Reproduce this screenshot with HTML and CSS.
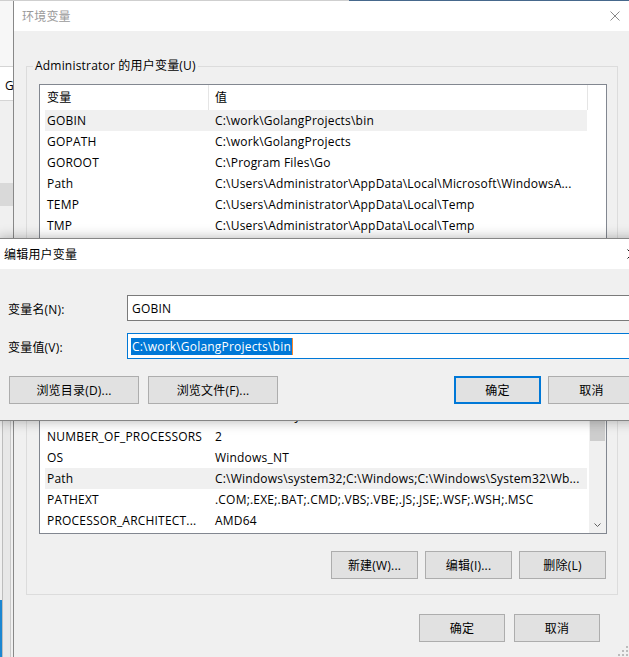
FILE: index.html
```html
<!DOCTYPE html>
<html lang="zh">
<head>
    <meta charset="UTF-8">
    <title>环境变量</title>
    <link rel="stylesheet" href="styles.css">
</head>
<body>
    <!-- 桌面顶部残边 -->
    <div class="topline"><span class="seg-a"></span><span class="seg-b"></span></div>

    <!-- 背后的系统属性窗口 -->
    <div class="backwin">
        <div class="bw-head"></div>
        <div class="bw-field">G</div>
        <div class="bw-gap"></div>
        <div class="bw-sel"></div>
        <div class="bw-gap2"></div>
        <div class="bw-lower">
            <div class="bw-task"><div class="bw-blue"></div></div>
            <div class="bw-mid"></div>
            <div class="bw-last"></div>
        </div>
    </div>

    <!-- 环境变量窗口 -->
    <div class="win main">
        <div class="titlebar">
            <span class="title">环境变量</span>
            <svg class="close" width="10" height="10" viewBox="0 0 10 10"><path d="M0.5 0.5L9.5 9.5M9.5 0.5L0.5 9.5" stroke="#8a8a8a" stroke-width="1"/></svg>
        </div>
        <div class="win-body">
            <fieldset class="group">
                <legend>Administrator 的用户变量(U)</legend>
                <div class="listview lv-user">
                    <div class="lv-main">
                        <div class="lv-head"><div class="hcell c1">变量</div><div class="hcell c2">值</div></div>
                        <div class="lv-row sel"><span class="c1">GOBIN</span><span class="c2">C:\work\GolangProjects\bin</span></div>
                        <div class="lv-row"><span class="c1">GOPATH</span><span class="c2">C:\work\GolangProjects</span></div>
                        <div class="lv-row"><span class="c1">GOROOT</span><span class="c2">C:\Program Files\Go</span></div>
                        <div class="lv-row"><span class="c1">Path</span><span class="c2">C:\Users\Administrator\AppData\Local\Microsoft\WindowsA...</span></div>
                        <div class="lv-row"><span class="c1">TEMP</span><span class="c2">C:\Users\Administrator\AppData\Local\Temp</span></div>
                        <div class="lv-row"><span class="c1">TMP</span><span class="c2">C:\Users\Administrator\AppData\Local\Temp</span></div>
                    </div>
                    <div class="lv-vbar"></div>
                </div>
                <div class="btnrow">
                    <button>新建(N)...</button>
                    <button>编辑(E)...</button>
                    <button>删除(D)</button>
                </div>
            </fieldset>

            <fieldset class="group group-sys">
                <legend>系统变量(S)</legend>
                <div class="listview lv-sys">
                    <div class="lv-main">
                        <div class="lv-head"><div class="hcell c1">变量</div><div class="hcell c2">值</div></div>
                        <div class="lv-row"><span class="c1">ComSpec</span><span class="c2">C:\Windows\system32\cmd.exe</span></div>
                        <div class="lv-row"><span class="c1">DriverData</span><span class="c2">C:\Windows\System32\Drivers\DriverData</span></div>
                        <div class="lv-row"><span class="c1">NUMBER_OF_PROCESSORS</span><span class="c2">2</span></div>
                        <div class="lv-row"><span class="c1">OS</span><span class="c2">Windows_NT</span></div>
                        <div class="lv-row sel"><span class="c1">Path</span><span class="c2">C:\Windows\system32;C:\Windows;C:\Windows\System32\Wb...</span></div>
                        <div class="lv-row"><span class="c1">PATHEXT</span><span class="c2">.COM;.EXE;.BAT;.CMD;.VBS;.VBE;.JS;.JSE;.WSF;.WSH;.MSC</span></div>
                        <div class="lv-row"><span class="c1">PROCESSOR_ARCHITECT...</span><span class="c2">AMD64</span></div>
                    </div>
                    <div class="lv-vbar">
                        <div class="sb-btn"><svg width="7" height="4" viewBox="0 0 7 4"><path d="M0.5 3.5L3.5 0.5L6.5 3.5" fill="none" stroke="#606060"/></svg></div>
                        <div class="sb-track"><div class="sb-thumb"></div></div>
                        <div class="sb-btn"><svg width="7" height="4" viewBox="0 0 7 4"><path d="M0.5 0.5L3.5 3.5L6.5 0.5" fill="none" stroke="#606060"/></svg></div>
                    </div>
                </div>
                <div class="btnrow">
                    <button>新建(W)...</button>
                    <button>编辑(I)...</button>
                    <button>删除(L)</button>
                </div>
            </fieldset>

            <div class="footer">
                <button>确定</button>
                <button>取消</button>
            </div>
        </div>
        <svg class="grip" width="12" height="12" viewBox="0 0 12 12">
            <rect x="9" y="1" width="2" height="2" fill="#bcbcbc"/>
            <rect x="5" y="5" width="2" height="2" fill="#bcbcbc"/>
            <rect x="9" y="5" width="2" height="2" fill="#bcbcbc"/>
            <rect x="1" y="9" width="2" height="2" fill="#bcbcbc"/>
            <rect x="5" y="9" width="2" height="2" fill="#bcbcbc"/>
            <rect x="9" y="9" width="2" height="2" fill="#bcbcbc"/>
        </svg>
    </div>

    <!-- 编辑用户变量对话框 -->
    <div class="win dialog">
        <div class="titlebar">
            <span class="title">编辑用户变量</span>
            <svg class="close" width="10" height="10" viewBox="0 0 10 10"><path d="M0.5 0.5L9.5 9.5M9.5 0.5L0.5 9.5" stroke="#111" stroke-width="1"/></svg>
        </div>
        <div class="dlg-body">
            <div class="field">
                <label>变量名(N):</label>
                <div class="textbox">GOBIN</div>
            </div>
            <div class="field">
                <label>变量值(V):</label>
                <div class="textbox focus"><span class="sel-text">C:\work\GolangProjects\bin</span><span class="caret"></span></div>
            </div>
            <div class="dlg-buttons">
                <button class="browse">浏览目录(D)...</button>
                <button class="browse">浏览文件(F)...</button>
                <button class="ok">确定</button>
                <button class="cancel">取消</button>
            </div>
        </div>
    </div>
</body>
</html>
```

FILE: styles.css
```css
/* 基础样式 */
* {
    margin: 0;
    padding: 0;
    box-sizing: border-box;
}

body {
    width: 629px;
    height: 657px;
    overflow: hidden;
    position: relative;
    background: #f0f0f0;
    font-family: "Open Sans", "Noto Sans CJK SC", sans-serif;
    font-size: 12px;
    letter-spacing: 0.2px;
    color: #000;
}

button {
    font: inherit;
    letter-spacing: inherit;
    color: #000;
    width: 86px;
    height: 28px;
    background: #e1e1e1;
    border: 1px solid #adadad;
}

/* 桌面与背后窗口 */
.topline {
    display: flex;
    height: 1px;
}

.topline .seg-a {
    width: 349px;
    background: #cfcfcf;
}

.topline .seg-b {
    flex: 1;
    background: #46688c;
}

.backwin {
    position: absolute;
    left: 0;
    top: 1px;
    width: 13px;
    height: 656px;
    display: flex;
    flex-direction: column;
    overflow: hidden;
    background: #f0f0f0;
}

.bw-head {
    height: 65px;
    background: #f7f7f7;
}

.bw-field {
    height: 35px;
    background: #fff;
    border-top: 1px solid #d5d5d5;
    border-bottom: 1px solid #d5d5d5;
    padding: 4px 0 0 5px;
    line-height: 29px;
}

.bw-gap {
    height: 82px;
}

.bw-sel {
    height: 23px;
    background: #d9d9d9;
}

.bw-gap2 {
    height: 214px;
}

.bw-lower {
    flex: 1;
    display: flex;
}

.bw-task {
    width: 3px;
    border-right: 1px solid #bdbdbd;
    display: flex;
    flex-direction: column;
    justify-content: flex-end;
}

.bw-blue {
    height: 57px;
    background: #1b86d1;
}

.bw-mid {
    width: 8px;
    background: #e8e8e8;
    border-right: 1px solid #c9c9c9;
}

.bw-last {
    flex: 1;
}

/* 窗口 */
.win {
    position: absolute;
    background: #f0f0f0;
}

.titlebar {
    height: 30px;
    background: #fff;
    display: flex;
    align-items: center;
    justify-content: space-between;
}

.main {
    left: 13px;
    top: 1px;
    width: 616px;
    height: 656px;
    border-left: 1px solid #888;
}

.main .titlebar {
    padding: 0 9px 0 8px;
}

.main .title {
    color: #9a9a9a;
}

.win-body {
    padding: 27px 11px 0 12px;
}

/* 分组框 */
.group {
    border: 1px solid #dcdcdc;
    padding: 10px 10px 15px 6px;
    min-width: 0;
}

.group legend {
    padding: 0 2px;
    line-height: 16px;
}

.group-sys {
    margin-top: 18px;
}

/* 列表 */
.listview {
    display: flex;
    margin-left: 6px;
    border: 1px solid #828790;
    background: #fff;
    overflow: hidden;
}

.lv-user {
    height: 169px;
}

.lv-sys {
    height: 176px;
}

.lv-main {
    flex: 1;
    min-width: 0;
}

.lv-head {
    display: flex;
    height: 25px;
    line-height: 25px;
}

.hcell {
    border-right: 1px solid #e5e5e5;
}

.hcell.c1 {
    width: 169px;
    padding-left: 7px;
}

.hcell.c2 {
    width: 379px;
    padding-left: 6px;
}

.lv-row {
    display: flex;
    width: 542px;
    height: 21px;
    line-height: 21px;
    margin-left: 5px;
    white-space: nowrap;
}

.lv-row.sel {
    background: #f0f0f0;
}

.lv-row .c1 {
    width: 163px;
    padding-left: 2px;
    overflow: hidden;
}

.lv-row .c2 {
    flex: 1;
    padding-left: 7px;
    overflow: hidden;
}

.lv-vbar {
    width: 17px;
    display: flex;
    flex-direction: column;
}

.lv-sys .lv-vbar {
    background: #f0f0f0;
}

.sb-btn {
    height: 17px;
    display: flex;
    align-items: center;
    justify-content: center;
}

.sb-track {
    flex: 1;
    padding: 1px;
}

.sb-thumb {
    height: 64px;
    background: #cdcdcd;
}

/* 按钮行 */
.btnrow {
    display: flex;
    justify-content: flex-end;
    gap: 7px;
    margin-top: 17px;
    padding-right: 1px;
}

.btnrow button {
    width: 87px;
}

.footer {
    display: flex;
    justify-content: flex-end;
    gap: 9px;
    margin-top: 19px;
    padding-right: 18px;
}

.grip {
    position: absolute;
    right: 0;
    bottom: 0;
}

/* 编辑对话框 */
.dialog {
    left: -2px;
    top: 238px;
    width: 655px;
    height: 183px;
    border: 1px solid #858585;
    box-shadow: 0 0 12px rgba(0, 0, 0, 0.3);
}

.dialog .titlebar {
    padding: 0 15px 0 5px;
}

.dlg-body {
    padding: 26px 17px 16px 9px;
}

.field {
    display: flex;
    align-items: center;
}

.field + .field {
    margin-top: 12px;
}

.field label {
    width: 119px;
    padding-top: 2px;
}

.textbox {
    flex: 1;
    height: 26px;
    display: flex;
    align-items: center;
    border: 1px solid #7a7a7a;
    background: #fff;
    padding-left: 4px;
    white-space: nowrap;
}

.textbox.focus {
    border-color: #0078d7;
    padding-left: 3px;
}

.sel-text {
    background: #0078d7;
    color: #fff;
    line-height: 17px;
    padding: 0 1px;
}

.caret {
    width: 1px;
    height: 17px;
    background: #ff8728;
}

.dlg-buttons {
    display: flex;
    margin-top: 17px;
}

.dlg-buttons .browse {
    width: 130px;
    margin-left: 1px;
}

.dlg-buttons .browse + .browse {
    margin-left: 9px;
}

.dlg-buttons .ok {
    width: 87px;
    margin-left: auto;
    border: 2px solid #0078d7;
}

.dlg-buttons .cancel {
    width: 87px;
    margin-left: 7px;
}
```
